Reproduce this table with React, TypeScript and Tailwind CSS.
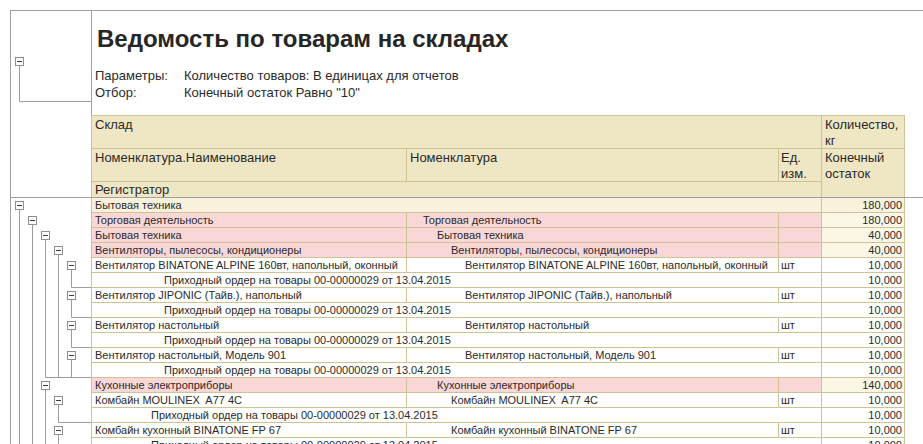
type Row =
  | { kind: "top"; name: string; qty: string }
  | { kind: "group"; name: string; nom: string; pad: string; qty: string }
  | { kind: "item"; name: string; nom: string; pad: string; qty: string }
  | { kind: "reg"; pad: string; qty: string };

const REG = "Приходный ордер на товары 00-00000029 от 13.04.2015";

const rows: Row[] = [
  { kind: "top", name: "Бытовая техника", qty: "180,000" },
  { kind: "group", name: "Торговая деятельность", nom: "Торговая деятельность", pad: "pl-[16px]", qty: "180,000" },
  { kind: "group", name: "Бытовая техника", nom: "Бытовая техника", pad: "pl-[30px]", qty: "40,000" },
  { kind: "group", name: "Вентиляторы, пылесосы, кондиционеры", nom: "Вентиляторы, пылесосы, кондиционеры", pad: "pl-[44px]", qty: "40,000" },
  { kind: "item", name: "Вентилятор BINATONE ALPINE 160вт, напольный, оконный", nom: "Вентилятор BINATONE ALPINE 160вт, напольный, оконный", pad: "pl-[58px]", qty: "10,000" },
  { kind: "reg", pad: "pl-[72px]", qty: "10,000" },
  { kind: "item", name: "Вентилятор JIPONIC (Тайв.), напольный", nom: "Вентилятор JIPONIC (Тайв.), напольный", pad: "pl-[58px]", qty: "10,000" },
  { kind: "reg", pad: "pl-[72px]", qty: "10,000" },
  { kind: "item", name: "Вентилятор настольный", nom: "Вентилятор настольный", pad: "pl-[58px]", qty: "10,000" },
  { kind: "reg", pad: "pl-[72px]", qty: "10,000" },
  { kind: "item", name: "Вентилятор настольный, Модель 901", nom: "Вентилятор настольный, Модель 901", pad: "pl-[58px]", qty: "10,000" },
  { kind: "reg", pad: "pl-[72px]", qty: "10,000" },
  { kind: "group", name: "Кухонные электроприборы", nom: "Кухонные электроприборы", pad: "pl-[30px]", qty: "140,000" },
  { kind: "item", name: "Комбайн MOULINEX  A77 4C", nom: "Комбайн MOULINEX  A77 4C", pad: "pl-[44px]", qty: "10,000" },
  { kind: "reg", pad: "pl-[59px]", qty: "10,000" },
  { kind: "item", name: "Комбайн кухонный BINATONE FP 67", nom: "Комбайн кухонный BINATONE FP 67", pad: "pl-[44px]", qty: "10,000" },
  { kind: "reg", pad: "pl-[59px]", qty: "10,000" },
];

// tree toggles: row index, x centre (local), last row of the group (null = runs on)
const nodes: { row: number; x: number; end: number | null }[] = [
  { row: 0, x: 8.5, end: null },
  { row: 1, x: 21.5, end: null },
  { row: 2, x: 34.5, end: 11 },
  { row: 3, x: 47.5, end: 11 },
  { row: 4, x: 60.5, end: 5 },
  { row: 6, x: 60.5, end: 7 },
  { row: 8, x: 60.5, end: 9 },
  { row: 10, x: 60.5, end: 11 },
  { row: 12, x: 34.5, end: null },
  { row: 13, x: 47.5, end: 14 },
  { row: 15, x: 47.5, end: 16 },
];

const cell = "h-[15px] border-b border-[#cfc395] text-[11px] leading-[14px] whitespace-pre overflow-hidden";

function Toggle({ x, y }: { x: number; y: number }) {
  return (
    <g>
      <rect x={x - 4} y={y - 4} width={8} height={8} fill="#fff" stroke="#8e8e8e" />
      <line x1={x - 2.5} y1={y} x2={x + 2.5} y2={y} stroke="#3c3c3c" />
    </g>
  );
}

function Tree({ height }: { height: number }) {
  return (
    <svg width={80} height={height} className="block">
      {nodes.map((n) => {
        const cy = 7.5 + n.row * 15;
        const endY = n.end === null ? height : n.end * 15 + 14.5;
        return (
          <g key={n.row}>
            <line x1={n.x} y1={cy + 4} x2={n.x} y2={endY} stroke="#9c9c9c" />
            {n.end !== null && <line x1={n.x} y1={endY} x2={80} y2={endY} stroke="#9c9c9c" />}
            <Toggle x={n.x} y={cy} />
          </g>
        );
      })}
    </svg>
  );
}

function DataRow({ r }: { r: Row }) {
  if (r.kind === "top") {
    return (
      <>
        <div className={`${cell} col-span-3 border-r bg-[#f8f2dd] pl-[3px]`}>{r.name}</div>
        <div className={`${cell} border-r bg-[#f8f2dd] pr-[2px] text-right`}>{r.qty}</div>
      </>
    );
  }
  if (r.kind === "group") {
    return (
      <>
        <div className={`${cell} border-r bg-[#f9d7d6] pl-[3px]`}>{r.name}</div>
        <div className={`${cell} border-r bg-[#f9d7d6] ${r.pad}`}>{r.nom}</div>
        <div className={`${cell} border-r bg-[#f9d7d6]`} />
        <div className={`${cell} border-r bg-[#fbf6e6] pr-[2px] text-right`}>{r.qty}</div>
      </>
    );
  }
  if (r.kind === "item") {
    return (
      <>
        <div className={`${cell} border-r bg-white pl-[3px]`}>{r.name}</div>
        <div className={`${cell} border-r bg-white ${r.pad}`}>{r.nom}</div>
        <div className={`${cell} border-r bg-white pl-[2px]`}>шт</div>
        <div className={`${cell} border-r bg-white pr-[2px] text-right`}>{r.qty}</div>
      </>
    );
  }
  return (
    <>
      <div className={`${cell} col-span-3 border-r bg-white ${r.pad}`}>{REG}</div>
      <div className={`${cell} border-r bg-white pr-[2px] text-right`}>{r.qty}</div>
    </>
  );
}

export default function App() {
  const hcell = "border-[#cfc395] bg-[#efe6c4] text-[13px] leading-[16px]";
  return (
    <div className="min-h-screen bg-white pl-[10px] pt-[10px] font-['Liberation_Sans',Arial,sans-serif] text-[#2a2a2a]">
      <div className="border-l border-t border-[#a0a0a0]">
        {/* title + column headers */}
        <div className="flex border-b border-[#a0a0a0]">
          <div className="w-[80px] shrink-0">
            <svg width={80} height={186} className="block">
              <line x1={8.5} y1={54.5} x2={8.5} y2={90.5} stroke="#9c9c9c" />
              <line x1={8.5} y1={90.5} x2={80} y2={90.5} stroke="#9c9c9c" />
              <Toggle x={8.5} y={50.5} />
            </svg>
          </div>
          <div className="flex-1">
            <div className="h-[104px] border-l border-[#a0a0a0]">
              <h1 className="pl-[5px] pt-[15px] text-[24px] font-bold leading-[26px] text-[#262626]">
                Ведомость по товарам на складах
              </h1>
              <div className="mt-[15px] grid grid-cols-[89px_1fr] pl-[3px] text-[13px] leading-[17px]">
                <div>Параметры:</div>
                <div>Количество товаров: В единицах для отчетов</div>
                <div>Отбор:</div>
                <div>Конечный остаток Равно "10"</div>
              </div>
            </div>
            <div className="grid w-[814px] grid-cols-[315px_372px_43px_83px] border-l border-t border-[#cfc395]">
              <div className={`${hcell} col-span-3 h-[33px] border-b border-r pl-[3px] pt-[1px]`}>Склад</div>
              <div className={`${hcell} h-[33px] border-b border-r pl-[3px] pt-[1px]`}>
                Количество,
                <br />
                кг
              </div>
              <div className={`${hcell} h-[33px] border-b border-r pl-[3px] pt-[1px]`}>Номенклатура.Наименование</div>
              <div className={`${hcell} h-[33px] border-b border-r pl-[3px] pt-[1px]`}>Номенклатура</div>
              <div className={`${hcell} h-[33px] border-b border-r pl-[2px] pt-[1px]`}>
                Ед.
                <br />
                изм.
              </div>
              <div className={`${hcell} row-span-2 border-r pl-[3px] pt-[1px]`}>
                Конечный
                <br />
                остаток
              </div>
              <div className={`${hcell} col-span-3 h-[15px] border-r pl-[3px] leading-[15px]`}>Регистратор</div>
            </div>
          </div>
        </div>

        {/* data rows */}
        <div className="flex">
          <div className="w-[80px] shrink-0">
            <Tree height={rows.length * 15} />
          </div>
          <div className="grid w-[814px] grid-cols-[315px_372px_43px_83px] self-start border-l border-[#cfc395]">
            {rows.map((r, i) => (
              <DataRow key={i} r={r} />
            ))}
          </div>
        </div>
      </div>
    </div>
  );
}
